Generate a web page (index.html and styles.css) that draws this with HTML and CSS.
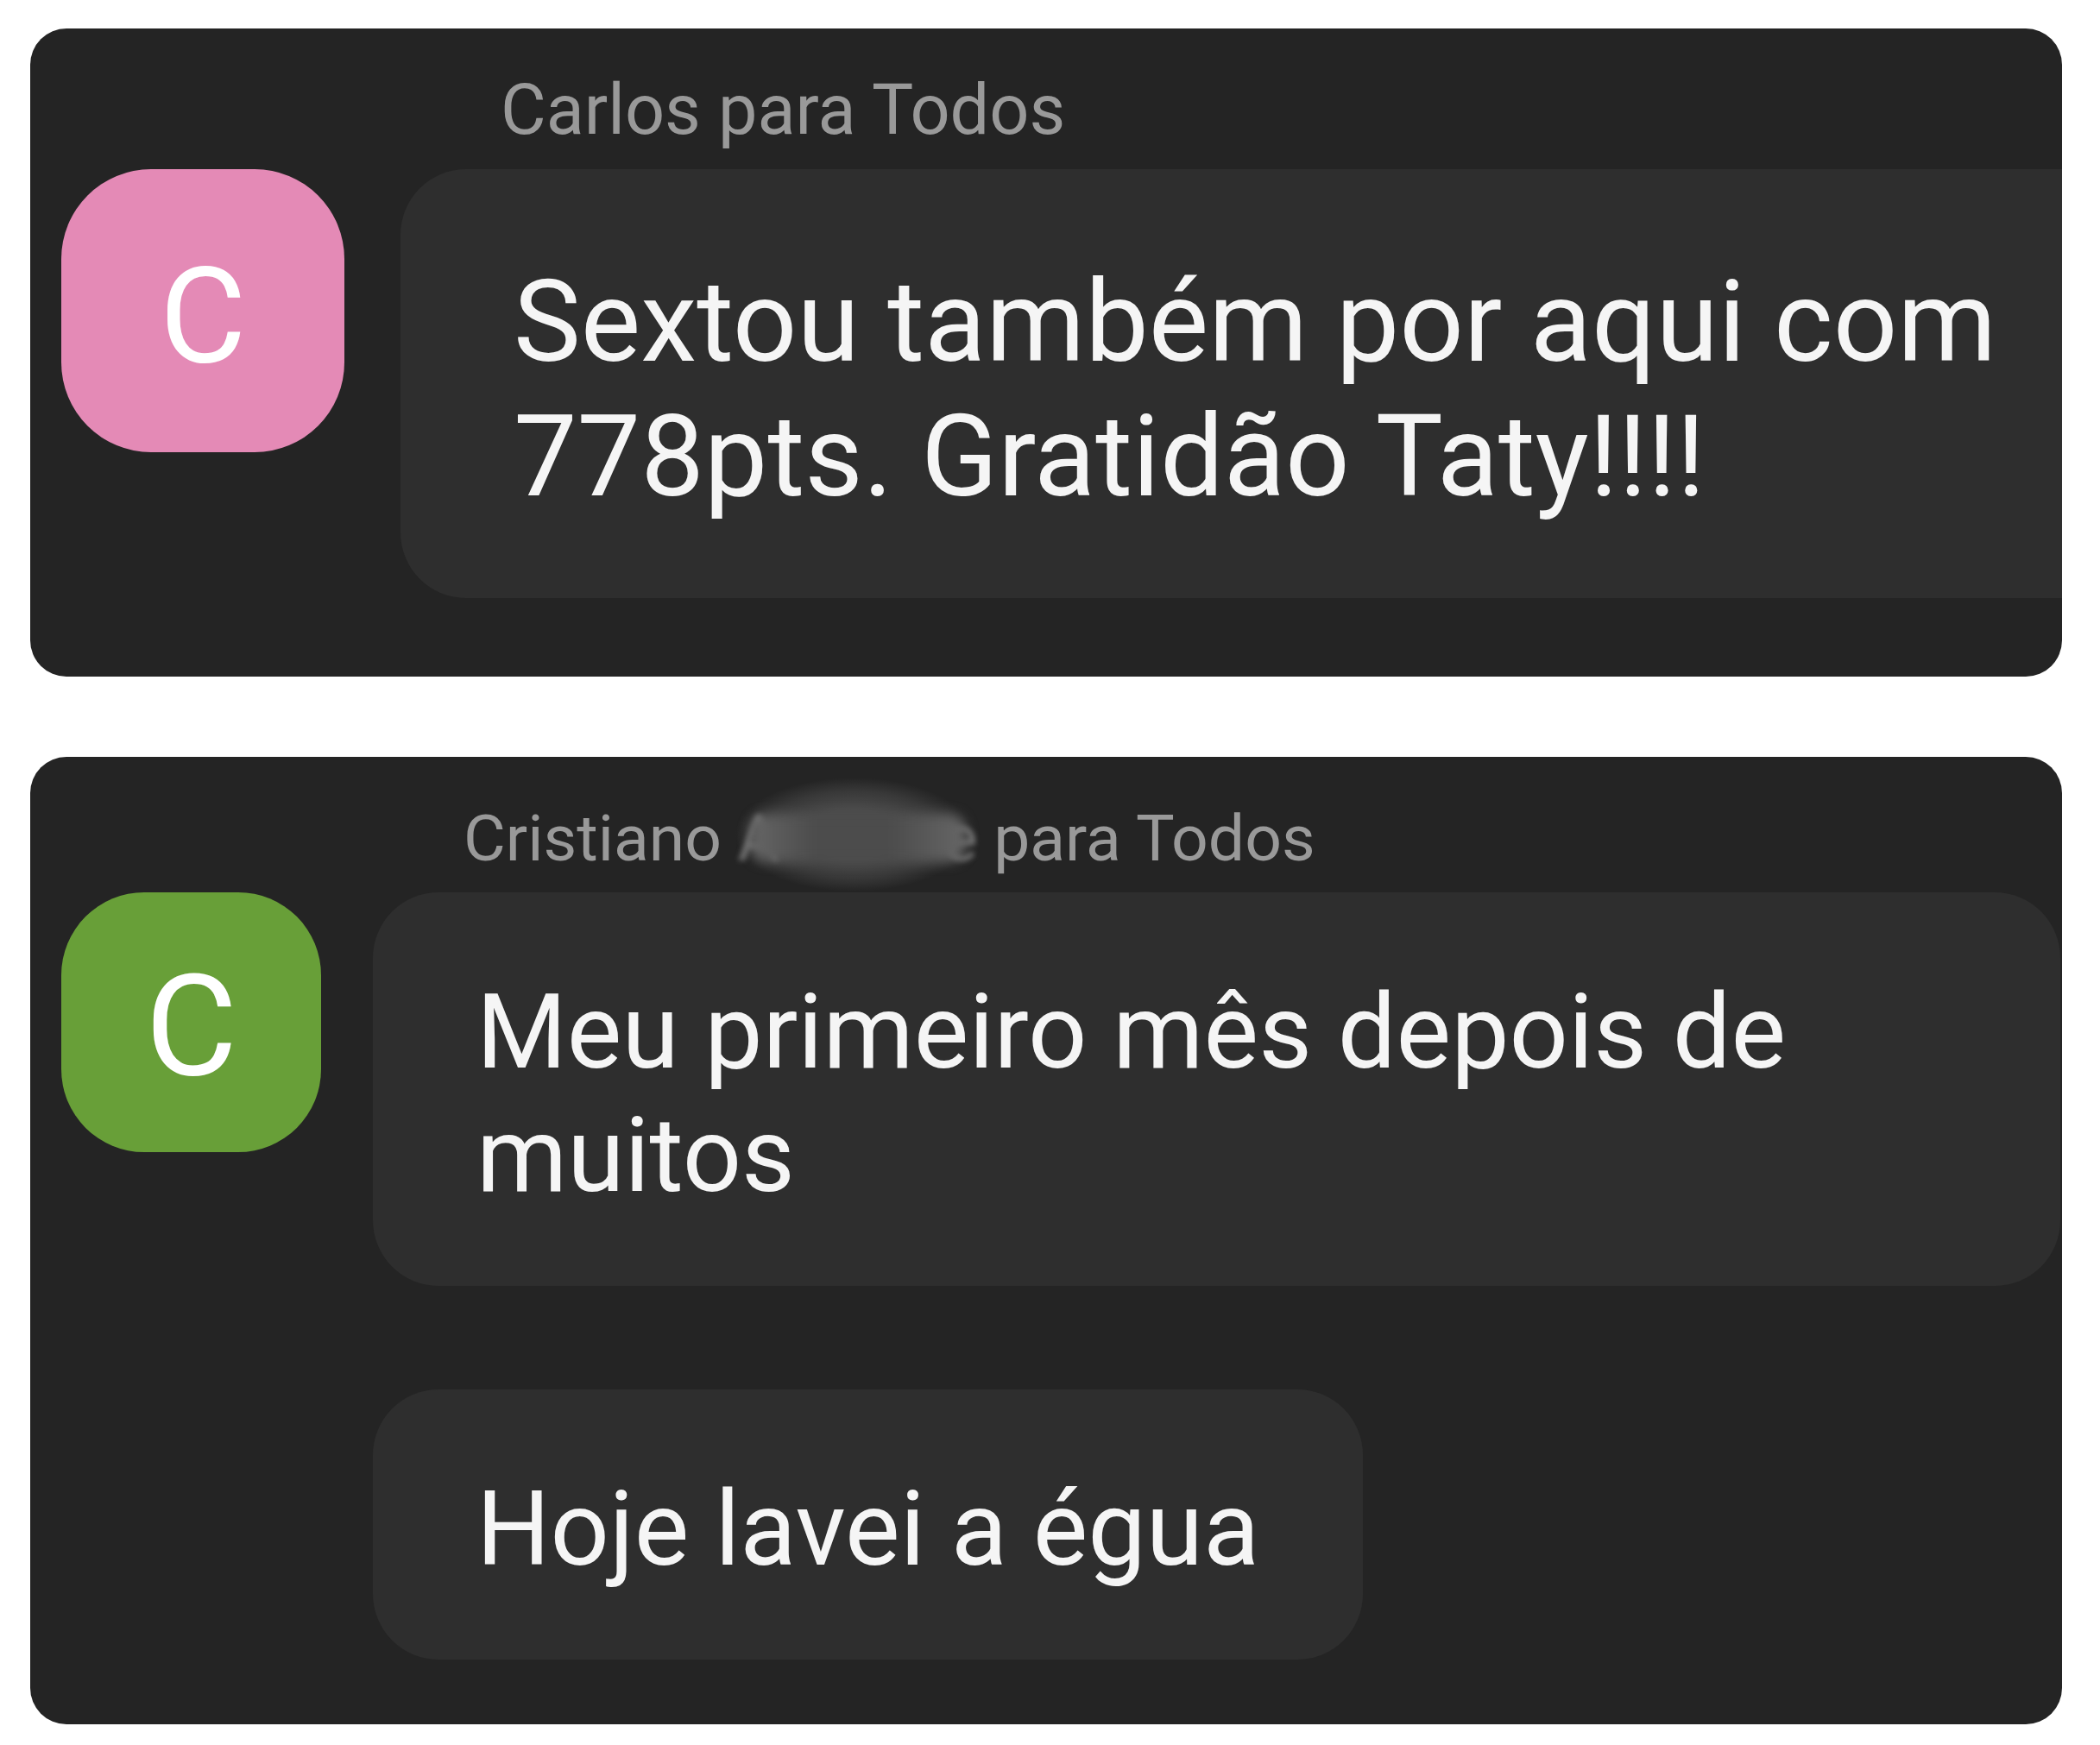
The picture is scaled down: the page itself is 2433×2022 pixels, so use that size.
FILE: index.html
```html
<!DOCTYPE html>
<html lang="pt-BR">
<head>
    <meta charset="UTF-8">
    <meta name="viewport" content="width=device-width, initial-scale=1.0">
    <title>Mensagens</title>
    <link rel="stylesheet" href="styles.css">
</head>
<body>

<main class="chat">
    <article class="card card-large">
        <p class="sender">Carlos para Todos</p>
        <div class="avatar pink">C</div>
        <div class="messages">
            <p class="bubble bubble-open">Sextou também por aqui com 778pts. Gratidão Taty!!!!</p>
        </div>
    </article>

    <article class="card card-small">
        <p class="sender">Cristiano <span class="hidden-name"><span>A</span><span>e</span></span> para Todos</p>
        <div class="avatar green">C</div>
        <div class="messages">
            <p class="bubble bubble-full">Meu primeiro mês depois de muitos</p>
            <p class="bubble">Hoje lavei a égua</p>
        </div>
    </article>
</main>

</body>
</html>
```

FILE: styles.css
```css
* {
    box-sizing: border-box;
}

body {
    margin: 0;
    background-color: #ffffff;
    font-family: Roboto, "Liberation Sans", sans-serif;
}

p {
    margin: 0;
}

.chat {
    display: flex;
    flex-direction: column;
    gap: 93px;
    padding: 33px 44px 24px 35px;
}

.card {
    display: grid;
    background-color: #242424;
    border-radius: 42px;
    overflow: hidden;
}

.card-large {
    grid-template-columns: 328px 1fr;
    column-gap: 65px;
    padding: 47px 0 91px 36px;
}

.card-small {
    grid-template-columns: 301px 1fr;
    column-gap: 60px;
    padding: 50px 2px 75px 36px;
}

.sender {
    grid-column: 2;
    color: #999999;
}

.card-large .sender {
    font-size: 81px;
    line-height: 96px;
    padding: 0 0 20px 116px;
}

.card-small .sender {
    font-size: 75px;
    line-height: 88px;
    padding: 0 0 19px 105px;
}

.avatar {
    display: flex;
    justify-content: center;
    align-items: center;
    color: #ffffff;
}

.card-large .avatar {
    height: 328px;
    padding-top: 14px;
    border-radius: 104px;
    font-size: 154px;
}

.card-small .avatar {
    height: 301px;
    padding-top: 8px;
    border-radius: 96px;
    font-size: 164px;
}

.pink {
    background-color: #e48ab6;
}

.green {
    background-color: #689f38;
}

.messages {
    display: flex;
    flex-direction: column;
    align-items: flex-start;
    gap: 120px;
}

.bubble {
    background-color: #2e2e2e;
    color: #f5f5f5;
    border-radius: 76px;
}

.card-large .bubble {
    font-size: 131px;
    line-height: 156px;
    padding: 99px 60px 86px 131px;
}

.card-small .bubble {
    font-size: 120px;
    line-height: 143px;
    padding: 91px 120px 79px;
}

.bubble-full {
    width: 100%;
}

.bubble-open {
    width: 100%;
    border-top-right-radius: 0;
    border-bottom-right-radius: 0;
}

/* surname smudged out */
.hidden-name {
    position: relative;
    display: inline-flex;
    justify-content: space-between;
    width: 278px;
}

.hidden-name span {
    filter: blur(3px);
    opacity: 0.7;
}

.hidden-name::before {
    content: "";
    position: absolute;
    top: -30px;
    left: -12px;
    right: -2px;
    height: 140px;
    background: radial-gradient(closest-side, #4c4c4c 0%, #4c4c4c 40%, rgba(76, 76, 76, 0.5) 72%, rgba(76, 76, 76, 0) 94%);
}

/* stroke ends dragged into the smudge */
.hidden-name::after {
    content: "";
    position: absolute;
    top: 16px;
    left: 14px;
    right: 14px;
    height: 56px;
    border-radius: 20px;
    background: linear-gradient(to right, #666666, #4c4c4c 30%, #4c4c4c 65%, #666666);
    filter: blur(7px);
}
```
